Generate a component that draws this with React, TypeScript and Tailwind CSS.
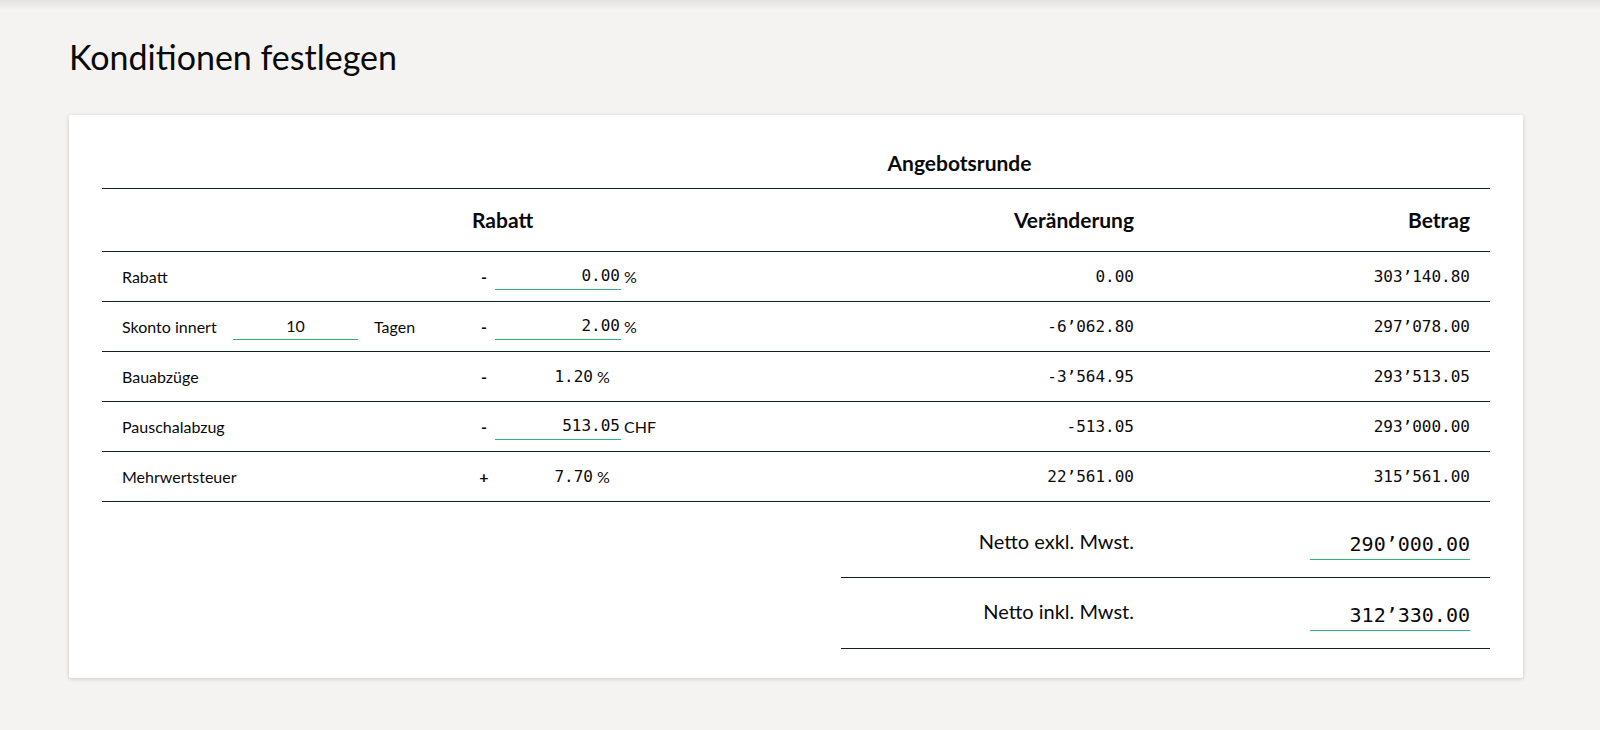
const GREEN = "border-[#2fb574]";

type Row = {
  label: string;
  skonto?: boolean;
  sign: string;
  value: string;
  editable: boolean;
  unit: string;
  change: string;
  amount: string;
};

const rows: Row[] = [
  { label: "Rabatt", sign: "-", value: "0.00", editable: true, unit: "%", change: "0.00", amount: "303’140.80" },
  { label: "Skonto innert", skonto: true, sign: "-", value: "2.00", editable: true, unit: "%", change: "-6’062.80", amount: "297’078.00" },
  { label: "Bauabzüge", sign: "-", value: "1.20", editable: false, unit: "%", change: "-3’564.95", amount: "293’513.05" },
  { label: "Pauschalabzug", sign: "-", value: "513.05", editable: true, unit: "CHF", change: "-513.05", amount: "293’000.00" },
  { label: "Mehrwertsteuer", sign: "+", value: "7.70", editable: false, unit: "%", change: "22’561.00", amount: "315’561.00" },
];

export default function App() {
  return (
    <div className="min-h-screen bg-[#f4f3f1] font-['Lato',sans-serif] text-[#0a0a0a]">
      <div className="h-[10px] bg-gradient-to-b from-[#e2e1df] to-[#f4f3f1]" />
      <div className="pl-[69px] pr-[77px] pb-[54px]">
        <h1 className="mt-[26px] text-[34px] leading-[42px] font-normal">Konditionen festlegen</h1>
        <div className="mt-[37px] rounded-[2px] bg-white px-[33px] pt-[36px] pb-[29px] shadow-[0_1px_4px_rgba(0,0,0,0.18)]">
          <div className="grid grid-cols-[358px_285px_429px_316px] border-b border-[#0f231e] pb-[13px]">
            <div className="col-start-3 text-center text-[21px] leading-[24px] font-bold">Angebotsrunde</div>
          </div>

          <div className="grid h-[63px] grid-cols-[358px_285px_429px_316px] items-center border-b border-[#0f231e] text-[21px] leading-[24px] font-bold">
            <div />
            <div className="pl-[12px]">Rabatt</div>
            <div className="pr-[40px] text-right">Veränderung</div>
            <div className="pr-[20px] text-right">Betrag</div>
          </div>

          {rows.map((r) => (
            <div
              key={r.label}
              className="grid h-[50px] grid-cols-[358px_285px_429px_316px] items-center border-b border-[#0f231e] text-[16px] leading-[20px]"
            >
              <div className="flex items-center pl-[20px]">
                {r.skonto ? (
                  <>
                    <span className="w-[111px]">{r.label}</span>
                    <div className={`h-[27px] w-[125px] border-b ${GREEN} text-center leading-[26px]`}>10</div>
                    <span className="ml-[16px]">Tagen</span>
                  </>
                ) : (
                  <span>{r.label}</span>
                )}
              </div>
              <div className="flex items-center pl-[19px]">
                <span className="w-[10px] text-center font-bold">{r.sign}</span>
                {r.editable ? (
                  <div
                    className={`ml-[6px] h-[27px] w-[126px] border-b ${GREEN} pr-[1px] text-right font-['DejaVu_Sans_Mono',monospace] leading-[26px]`}
                  >
                    {r.value}
                  </div>
                ) : (
                  <div className="ml-[6px] w-[98px] text-right font-['DejaVu_Sans_Mono',monospace]">{r.value}</div>
                )}
                <span className={r.editable ? "ml-[3px]" : "ml-[4px]"}>{r.unit}</span>
              </div>
              <div className="pr-[40px] text-right font-['DejaVu_Sans_Mono',monospace]">{r.change}</div>
              <div className="pr-[20px] text-right font-['DejaVu_Sans_Mono',monospace]">{r.amount}</div>
            </div>
          ))}

          <div className="ml-auto w-[649px]">
            <div className="flex h-[76px] items-start border-b border-[#0f231e]">
              <div className="w-[293px] pt-[27px] text-right text-[20px] leading-[24px]">Netto exkl. Mwst.</div>
              <div
                className={`ml-[176px] mt-[30px] w-[160px] border-b ${GREEN} pb-[3px] text-right font-['DejaVu_Sans_Mono',monospace] text-[20px] leading-[24px]`}
              >
                290’000.00
              </div>
            </div>
            <div className="flex h-[71px] items-start border-b border-[#0f231e]">
              <div className="w-[293px] pt-[21px] text-right text-[20px] leading-[24px]">Netto inkl. Mwst.</div>
              <div
                className={`ml-[176px] mt-[25px] w-[160px] border-b ${GREEN} pb-[3px] text-right font-['DejaVu_Sans_Mono',monospace] text-[20px] leading-[24px]`}
              >
                312’330.00
              </div>
            </div>
          </div>
        </div>
      </div>
    </div>
  );
}
